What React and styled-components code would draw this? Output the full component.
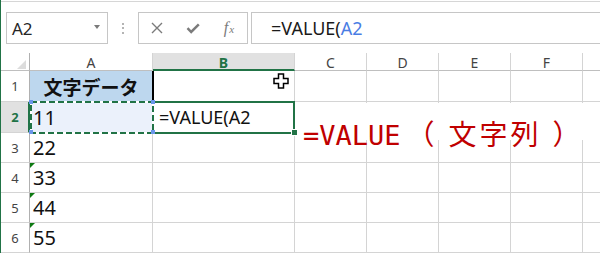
import React from 'react';
import styled, { createGlobalStyle } from 'styled-components';

const Global = createGlobalStyle`
  html, body { margin: 0; padding: 0; background: #fff; }
  body {
    width: 600px; height: 253px; overflow: hidden;
    font-family: "Noto Sans", "Noto Sans CJK JP", sans-serif;
  }
`;

const GREEN = '#217346';
const GRID = '#d4d4d4';

const Window = styled.div`
  position: relative;
  width: 600px;
  height: 253px;
  box-sizing: border-box;
  border-left: 1px solid ${GREEN};
  background: #fff;
  overflow: hidden;
`;

/* ---------- formula bar ---------- */
const Toolbar = styled.div`
  margin-top: 1px;
  height: 52px;
  box-sizing: border-box;
  border-top: 1px solid #d6d6d6;
  padding: 10px 0 0 5px;
  display: flex;
  align-items: flex-start;
`;

const NameBox = styled.div`
  width: 102px;
  height: 32px;
  box-sizing: border-box;
  border: 1px solid #c6c6c6;
  display: flex;
  align-items: center;
  justify-content: space-between;
  padding: 0 7px 0 5px;
  font-size: 17px;
  color: #262626;
`;

const Caret = styled.span`
  width: 0;
  height: 0;
  border-left: 3px solid transparent;
  border-right: 3px solid transparent;
  border-top: 4px solid #7a7a7a;
  margin-bottom: 3px;
`;

const Grip = styled.div`
  width: 30px;
  height: 32px;
  display: flex;
  flex-direction: column;
  align-items: center;
  justify-content: center;
  gap: 2.5px;
`;

const Dot = styled.span`
  width: 2px;
  height: 2px;
  background: #b4b4b4;
`;

const FxButtons = styled.div`
  width: 110px;
  height: 32px;
  box-sizing: border-box;
  border: 1px solid #c6c6c6;
  display: grid;
  grid-template-columns: repeat(3, 1fr);
`;

const FxButton = styled.div`
  display: flex;
  align-items: center;
  justify-content: center;
  color: #7b7b7b;
`;

const FxLabel = styled.span`
  font-family: "Liberation Serif", "DejaVu Serif", serif;
  font-style: italic;
  color: #7b7b7b;
  display: flex;
  align-items: baseline;
  margin-top: -1px;
`;

const FxF = styled.span`
  font-size: 16px;
`;

const FxX = styled.span`
  font-size: 11px;
  margin-left: 1px;
`;

const FormulaInput = styled.div`
  flex: 1;
  margin-left: 3px;
  margin-right: -2px;
  height: 32px;
  box-sizing: border-box;
  border: 1px solid #c6c6c6;
  display: flex;
  align-items: center;
  padding-left: 19px;
  font-size: 18px;
  color: #1a1a1a;
  white-space: pre;
`;

const Ref = styled.span`
  color: #4a7de4;
`;

/* ---------- sheet ---------- */
const Sheet = styled.div`
  position: relative;
  display: grid;
  grid-template-columns: 29px 123px 142px 72px 72px 72px 72px 1fr;
  grid-template-rows: 18px 31px 31px 30px 30px 30px 30px;
`;

const Corner = styled.div`
  box-sizing: border-box;
  border-right: 1px solid #b0b0b0;
  border-bottom: 1px solid #bfbfbf;
  display: flex;
  align-items: flex-end;
  justify-content: flex-end;
  padding: 0 3px 1px 0;
`;

const SelectAll = styled.span`
  width: 0;
  height: 0;
  border-left: 9px solid transparent;
  border-bottom: 9px solid #dcdcdc;
`;

const ColHead = styled.div`
  box-sizing: border-box;
  border-right: ${p => (p.$last ? 'none' : `1px solid ${GRID}`)};
  border-bottom: ${p => (p.$active ? `2px solid ${GREEN}` : '1px solid #bfbfbf')};
  background: ${p => (p.$active ? '#e1e1e1' : '#fff')};
  color: ${p => (p.$active ? GREEN : '#444')};
  font-weight: ${p => (p.$active ? 700 : 400)};
  font-size: 14px;
  line-height: 1;
  display: flex;
  align-items: center;
  justify-content: center;
  padding-top: 3px;
`;

const RowHead = styled.div`
  box-sizing: border-box;
  border-right: ${p => (p.$active ? `2px solid ${GREEN}` : '1px solid #b0b0b0')};
  border-bottom: 1px solid ${GRID};
  background: ${p => (p.$active ? '#e1e1e1' : '#fff')};
  color: ${p => (p.$active ? GREEN : '#444')};
  font-weight: ${p => (p.$active ? 700 : 400)};
  font-size: 13px;
  display: flex;
  align-items: center;
  justify-content: center;
  padding-left: ${p => (p.$active ? '1px' : '0')};
`;

const Cell = styled.div`
  position: relative;
  box-sizing: border-box;
  border-right: ${p => (p.$last ? 'none' : `1px solid ${GRID}`)};
  border-bottom: 1px solid ${GRID};
  background: ${p => p.$bg || '#fff'};
  display: flex;
  align-items: center;
  min-width: 0;
`;

const TitleCell = styled(Cell)`
  justify-content: center;
  border-right-color: #000;
  font-family: "Noto Sans CJK JP", sans-serif;
  font-weight: 700;
  font-size: 19px;
  color: #111;
`;

const NumCell = styled(Cell)`
  padding-left: 3px;
  font-size: 20px;
  color: #111;
`;

const FormulaCell = styled(Cell)`
  padding-left: 6px;
  font-size: 18px;
  color: #111;
  white-space: pre;
  border-left: ${p => (p.$mark ? '1px solid #000' : 'none')};
`;

const ErrorFlag = styled.span`
  position: absolute;
  left: 0;
  top: 0;
  width: 0;
  height: 0;
  border-top: 5px solid #0e7a12;
  border-right: 5px solid transparent;
`;

/* ---------- overlays on the sheet ---------- */
const ActiveBorder = styled.div`
  position: absolute;
  left: 151px;
  top: 48px;
  width: 143px;
  height: 33px;
  box-sizing: border-box;
  border: 2px solid ${GREEN};
  pointer-events: none;
`;

const MarchingAnts = styled.svg`
  position: absolute;
  left: 29px;
  top: 48px;
  overflow: visible;
  pointer-events: none;
`;

const Handle = styled.span`
  position: absolute;
  left: ${p => p.$x}px;
  top: ${p => p.$y}px;
  width: 4px;
  height: 4px;
  background: #6a96ea;
`;

const FillHandle = styled.span`
  position: absolute;
  left: 290px;
  top: 76px;
  width: 5px;
  height: 5px;
  background: ${GREEN};
  border: 1px solid #fff;
`;

const Pointer = styled.svg`
  position: absolute;
  left: 272px;
  top: 20px;
`;

const Note = styled.div`
  position: absolute;
  left: 296px;
  top: 50px;
  width: 303px;
  height: 37px;
  box-sizing: border-box;
  background: #fff;
  padding: 16px 0 0 6px;
  display: flex;
  align-items: baseline;
  color: #c00000;
  white-space: pre;
`;

const NoteLatin = styled.span`
  font-family: "DejaVu Sans Mono", monospace;
  font-size: 27px;
  line-height: 27px;
`;

const NoteJp = styled.span`
  font-family: "Noto Sans CJK JP", sans-serif;
  font-weight: 400;
  font-size: 28px;
  line-height: 28px;
  letter-spacing: ${p => p.$spacing || 0}px;
  margin-left: ${p => p.$gap || 0}px;
`;

const COLS = ['A', 'B', 'C', 'D', 'E', 'F', ''];
const ROWS = [
  { n: 1, a: '文字データ' },
  { n: 2, a: '11', b: '=VALUE(A2' },
  { n: 3, a: '22' },
  { n: 4, a: '33', flag: true },
  { n: 5, a: '44', flag: true },
  { n: 6, a: '55', flag: true },
];

export default function App() {
  return (
    <>
      <Global />
      <Window>
        <Toolbar>
          <NameBox>
            <span>A2</span>
            <Caret />
          </NameBox>
          <Grip>
            <Dot />
            <Dot />
            <Dot />
          </Grip>
          <FxButtons>
            <FxButton>
              <svg width="12" height="12" viewBox="0 0 12 12">
                <path d="M1 1 L11 11 M11 1 L1 11" stroke="#7b7b7b" strokeWidth="1.4" fill="none" />
              </svg>
            </FxButton>
            <FxButton>
              <svg width="14" height="11" viewBox="0 0 14 11">
                <polyline points="1.5,5.2 5.2,9 12.8,1.4" stroke="#7b7b7b" strokeWidth="2.5" fill="none" />
              </svg>
            </FxButton>
            <FxButton>
              <FxLabel>
                <FxF>f</FxF>
                <FxX>x</FxX>
              </FxLabel>
            </FxButton>
          </FxButtons>
          <FormulaInput>
            =VALUE(<Ref>A2</Ref>
          </FormulaInput>
        </Toolbar>

        <Sheet>
          <Corner>
            <SelectAll />
          </Corner>
          {COLS.map((c, i) => (
            <ColHead key={'h' + i} $active={c === 'B'} $last={i === COLS.length - 1}>
              {c}
            </ColHead>
          ))}
          {ROWS.map(r => (
            <React.Fragment key={r.n}>
              <RowHead $active={r.n === 2}>{r.n}</RowHead>
              {r.n === 1 ? (
                <TitleCell $bg="#bdd7ee">{r.a}</TitleCell>
              ) : (
                <NumCell $bg={r.n === 2 ? '#ebf1fb' : '#fff'}>
                  {r.flag && <ErrorFlag />}
                  {r.a}
                </NumCell>
              )}
              <FormulaCell $mark={r.n === 1}>{r.b || ''}</FormulaCell>
              <Cell />
              <Cell />
              <Cell />
              <Cell />
              <Cell $last />
            </React.Fragment>
          ))}

          <ActiveBorder />
          <MarchingAnts width="124" height="33" viewBox="0 0 124 33">
            <rect x="1" y="1" width="122" height="31" fill="none" stroke="#fff" strokeWidth="2" />
            <rect x="1" y="1" width="122" height="31" fill="none" stroke={GREEN} strokeWidth="2" strokeDasharray="6 3" />
          </MarchingAnts>
          <Handle $x={28} $y={47} />
          <Handle $x={150} $y={47} />
          <Handle $x={28} $y={77} />
          <Handle $x={150} $y={77} />
          <FillHandle />

          <Pointer width="16" height="16" viewBox="0 0 16 16">
            <path
              d="M5.5 1 H10.5 V5.5 H15 V10.5 H10.5 V15 H5.5 V10.5 H1 V5.5 H5.5 Z"
              fill="#fff"
              stroke="#000"
              strokeWidth="1.5"
            />
          </Pointer>

          <Note>
            <NoteLatin>=VALUE</NoteLatin>
            <NoteJp $gap={6}>（</NoteJp>
            <NoteJp $gap={14} $spacing={3}>文字列</NoteJp>
            <NoteJp $gap={11}>）</NoteJp>
          </Note>
        </Sheet>
      </Window>
    </>
  );
}
